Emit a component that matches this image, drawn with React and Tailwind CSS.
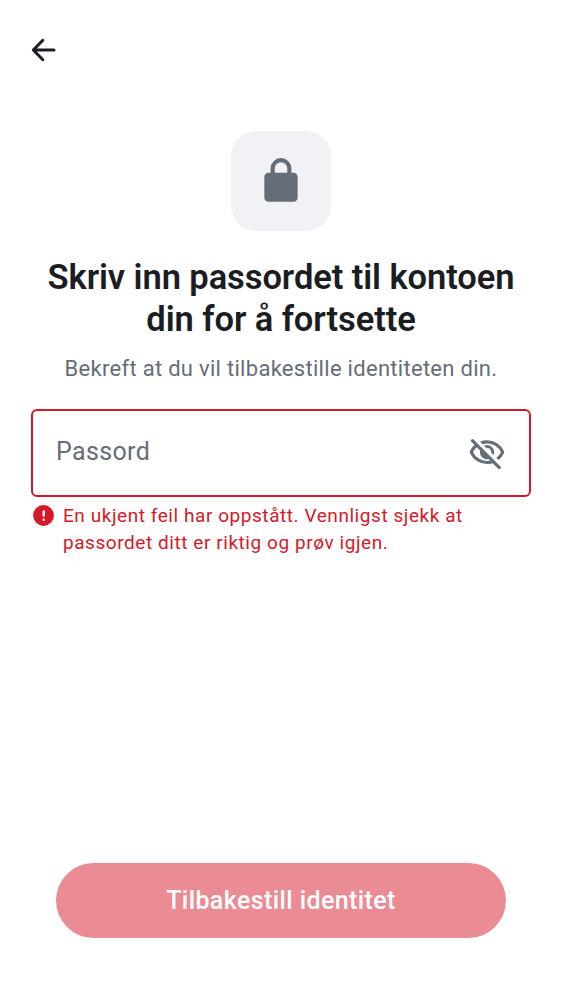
export default function App() {
  return (
    <main className="flex h-[1000px] w-[562px] flex-col bg-white font-['Roboto',sans-serif] text-[#1b1d22]">
      <header className="pt-[35px] pl-[28px]">
        <button aria-label="Tilbake" className="block">
          <svg className="block size-[30px]" viewBox="0 0 30 30" fill="none" stroke="currentColor" strokeWidth="3" strokeLinecap="round" strokeLinejoin="round">
            <path d="M14.8 5.3 5.3 15l9.5 9.7M5.5 15H26" />
          </svg>
        </button>
      </header>
      <section className="flex flex-col items-center pt-[66px]">
        <div className="flex size-[100px] items-center justify-center rounded-[25px] bg-[#f0f2f5]">
          <svg className="block size-[50px]" viewBox="0 0 24 24" fill="#656d77">
            <path d="M6 22q-.825 0-1.412-.587A1.93 1.93 0 0 1 4 20V10q0-.825.588-1.412A1.93 1.93 0 0 1 6 8h1V6q0-2.075 1.463-3.537Q9.926 1 12 1q2.075 0 3.537 1.463Q17 3.925 17 6v2h1q.824 0 1.413.588Q20 9.175 20 10v10q0 .824-.587 1.413A1.93 1.93 0 0 1 18 22zM9 8h6V6q0-1.25-.875-2.125A2.9 2.9 0 0 0 12 3q-1.25 0-2.125.875A2.9 2.9 0 0 0 9 6z" />
          </svg>
        </div>
        <h1 className="mt-[25px] text-center text-[34.5px] leading-[42px] font-semibold tracking-[-0.08px]">Skriv inn passordet til kontoen<br />din for å fortsette</h1>
        <p className="mt-[16px] text-[22px] leading-[26px] tracking-[0.29px] text-[#656d77]">Bekreft at du vil tilbakestille identiteten din.</p>
      </section>
      <section className="px-[31px] pt-[27px]">
        <div className="flex h-[88px] items-center justify-between rounded-[6px] border-2 border-[#d51928] pr-[23px] pl-[23px] text-[#656d77]">
          <span className="-mt-[2px] text-[25px] tracking-[0.35px]">Passord</span>
          <svg className="block size-[38px]" viewBox="0 0 24 24" fill="currentColor">
            <path d="m16.1 13.3-1.45-1.45q.225-1.175-.675-2.2t-2.325-.8L10.2 7.4q.424-.2.863-.3A4.2 4.2 0 0 1 12 7q1.875 0 3.188 1.313Q16.5 9.625 16.5 11.5q0 .5-.1.938t-.3.862m3.2 3.15-1.45-1.4a11 11 0 0 0 1.688-1.588A9 9 0 0 0 20.8 11.5q-1.25-2.524-3.588-4.013Q14.875 6 12 6q-.724 0-1.425.1a10 10 0 0 0-1.375.3L7.65 4.85A11.1 11.1 0 0 1 12 4q3.575 0 6.425 1.887T22.7 10.8a.8.8 0 0 1 .1.313q.025.188.025.387a2 2 0 0 1-.125.7 10.9 10.9 0 0 1-3.4 4.25m-.2 5.45-3.5-3.45q-.874.274-1.762.413Q12.95 19 12 19q-3.575 0-6.425-1.887T1.3 12.2a.8.8 0 0 1-.125-.312 3 3 0 0 1 0-.763.8.8 0 0 1 .125-.3Q1.825 9.7 2.55 8.75A13.3 13.3 0 0 1 4.15 7L2.075 4.9a.93.93 0 0 1-.275-.688q0-.412.3-.712a.95.95 0 0 1 .7-.275q.425 0 .7.275l17 17q.275.275.287.688a.93.93 0 0 1-.287.712.95.95 0 0 1-.7.275.95.95 0 0 1-.7-.275M5.55 8.4q-.725.65-1.325 1.425A9 9 0 0 0 3.2 11.5q1.25 2.524 3.587 4.012Q9.125 17 12 17q.5 0 .975-.062T13.95 16.8l-.9-.95q-.274.075-.525.112A4 4 0 0 1 12 16q-1.875 0-3.188-1.312Q7.5 13.375 7.5 11.5q0-.274.037-.525.038-.25.113-.525z" />
          </svg>
        </div>
        <div className="mt-[5px] flex gap-[7px] text-[#d51928]">
          <svg className="mt-px block size-[25px]" viewBox="0 0 24 24">
            <circle cx="12" cy="12" r="10" fill="currentColor" />
            <path d="M12.2 8v4M12.2 16v.01" fill="none" stroke="#fff" strokeWidth="2.3" strokeLinecap="round" />
          </svg>
          <p className="text-[19px] leading-[27px] tracking-[0.56px]">En ukjent feil har oppstått. Vennligst sjekk at<br />passordet ditt er riktig og prøv igjen.</p>
        </div>
      </section>
      <footer className="mt-auto px-[56px] pb-[62.5px]">
        <button className="block h-[75px] w-full rounded-full bg-[#eb8b93] pt-px text-[25px] font-medium tracking-[0.4px] text-white">Tilbakestill identitet</button>
      </footer>
    </main>
  );
}
